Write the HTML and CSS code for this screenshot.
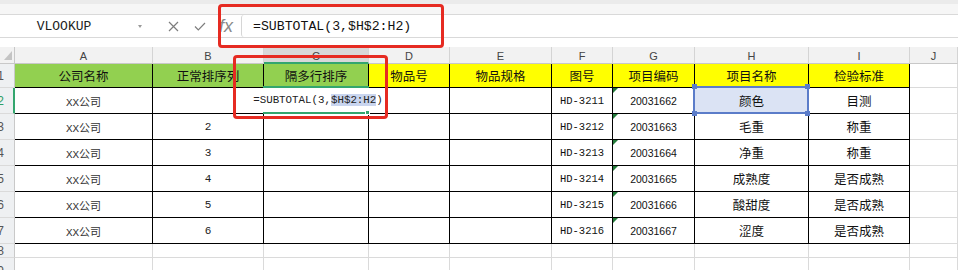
FILE: index.html
```html
<!doctype html>
<html lang="zh-CN">
<head>
  <meta charset="utf-8">
  <title>SUBTOTAL 隔多行排序</title>
  <link rel="stylesheet" href="styles.css">
</head>
<body>
  <div class="toolbar"></div>

  <div class="fbar">
    <div class="namebox"><span class="nb-text">VLOOKUP</span><span class="nb-arrow"></span></div>
    <svg class="ico-x" width="11" height="11" viewBox="0 0 11 11"><path d="M1 1L10 10M10 1L1 10" stroke="#7d7d7d" stroke-width="1.2" fill="none"/></svg>
    <svg class="ico-ok" width="12" height="9" viewBox="0 0 12 9"><path d="M1 4.5L4.3 7.8L11 1" stroke="#7d7d7d" stroke-width="1.2" fill="none"/></svg>
    <span class="fx">fx</span>
    <div class="finput">=SUBTOTAL(3,$H$2:H2)</div>
  </div>

  <div class="sheet">
    <!-- column headers -->
    <div class="c corner"></div>
    <div class="c ch">A</div>
    <div class="c ch">B</div>
    <div class="c ch cur">C</div>
    <div class="c ch">D</div>
    <div class="c ch">E</div>
    <div class="c ch">F</div>
    <div class="c ch">G</div>
    <div class="c ch">H</div>
    <div class="c ch">I</div>
    <div class="c ch">J</div>

    <!-- 1 -->
    <div class="c rh">1</div>
    <div class="c t g">公司名称</div>
    <div class="c t g">正常排序列</div>
    <div class="c t g">隔多行排序</div>
    <div class="c t y">物品号</div>
    <div class="c t y">物品规格</div>
    <div class="c t y">图号</div>
    <div class="c t y">项目编码</div>
    <div class="c t y">项目名称</div>
    <div class="c t y">检验标准</div>
    <div class="c"></div>

    <!-- 2 -->
    <div class="c rh on">2</div>
    <div class="c t co">XX公司</div>
    <div class="c t num"></div>
    <div class="c t edit">
      <div class="editor">=SUBTOTAL(3,<span class="ref">$H$2:H2</span>)</div>
      <span class="fill-h"></span>
    </div>
    <div class="c t"></div>
    <div class="c t"></div>
    <div class="c t dr">HD-3211</div>
    <div class="c t code">20031662</div>
    <div class="c t sel">颜色
      <span class="hd tl"></span><span class="hd tr"></span><span class="hd bl"></span><span class="hd br"></span>
    </div>
    <div class="c t">目测</div>
    <div class="c"></div>

    <!-- 3 -->
    <div class="c rh">3</div>
    <div class="c t co">XX公司</div>
    <div class="c t num">2</div>
    <div class="c t"></div>
    <div class="c t"></div>
    <div class="c t"></div>
    <div class="c t dr">HD-3212</div>
    <div class="c t code">20031663</div>
    <div class="c t">毛重</div>
    <div class="c t">称重</div>
    <div class="c"></div>

    <!-- 4 -->
    <div class="c rh">4</div>
    <div class="c t co">XX公司</div>
    <div class="c t num">3</div>
    <div class="c t"></div>
    <div class="c t"></div>
    <div class="c t"></div>
    <div class="c t dr">HD-3213</div>
    <div class="c t code">20031664</div>
    <div class="c t">净重</div>
    <div class="c t">称重</div>
    <div class="c"></div>

    <!-- 5 -->
    <div class="c rh">5</div>
    <div class="c t co">XX公司</div>
    <div class="c t num">4</div>
    <div class="c t"></div>
    <div class="c t"></div>
    <div class="c t"></div>
    <div class="c t dr">HD-3214</div>
    <div class="c t code">20031665</div>
    <div class="c t">成熟度</div>
    <div class="c t">是否成熟</div>
    <div class="c"></div>

    <!-- 6 -->
    <div class="c rh">6</div>
    <div class="c t co">XX公司</div>
    <div class="c t num">5</div>
    <div class="c t"></div>
    <div class="c t"></div>
    <div class="c t"></div>
    <div class="c t dr">HD-3215</div>
    <div class="c t code">20031666</div>
    <div class="c t">酸甜度</div>
    <div class="c t">是否成熟</div>
    <div class="c"></div>

    <!-- 7 -->
    <div class="c rh">7</div>
    <div class="c t co">XX公司</div>
    <div class="c t num">6</div>
    <div class="c t"></div>
    <div class="c t"></div>
    <div class="c t"></div>
    <div class="c t dr">HD-3216</div>
    <div class="c t code">20031667</div>
    <div class="c t">涩度</div>
    <div class="c t">是否成熟</div>
    <div class="c"></div>

    <!-- 8 -->
    <div class="c rh">8</div>
    <div class="c"></div><div class="c"></div><div class="c"></div><div class="c"></div><div class="c"></div>
    <div class="c"></div><div class="c"></div><div class="c"></div><div class="c"></div><div class="c"></div>

    <!-- 9 -->
    <div class="c rh">9</div>
    <div class="c"></div><div class="c"></div><div class="c"></div><div class="c"></div><div class="c"></div>
    <div class="c"></div><div class="c"></div><div class="c"></div><div class="c"></div><div class="c"></div>
  </div>

  <div class="mark mark-bar"></div>
  <div class="mark mark-cell"></div>
</body>
</html>
```

FILE: styles.css
```css
:root{
  --grid:#dadada; --head:#f2f2f2; --rowhead:#eef0f2;
  --green:#92d050; --yellow:#ffff00; --active:#33a66e;
  --selfill:#dbe3f4; --seledge:#5b7cc9; --red:#e62b22;
}
html,body{margin:0;padding:0;background:#fff}
body{
  position:relative;width:958px;height:270px;overflow:hidden;
  font-family:"Noto Sans CJK SC","Liberation Sans",sans-serif;
  font-size:12.5px;color:#111
}

/* toolbar + formula bar */
.toolbar{height:10px;background:#f6f6f6;border-top:4px solid #ebebeb}
.fbar{
  display:flex;align-items:center;height:22px;
  border-top:1px solid #d9d9d9;border-bottom:1px solid #d9d9d9
}
.namebox{display:flex;align-items:center;width:150px;flex:none}
.nb-text{width:128px;text-align:center;font:13px "Liberation Mono",monospace;color:#222}
.nb-arrow{
  margin-left:10px;width:0;height:0;
  border-left:2.5px solid transparent;border-right:2.5px solid transparent;
  border-top:3px solid #9a9a9a
}
.ico-x{margin-left:18px;flex:none}
.ico-ok{margin-left:15px;flex:none}
.fx{
  margin-left:13px;width:15px;flex:none;
  font:italic 18px "Liberation Sans",sans-serif;color:#8a8a8a;line-height:1
}
.finput{
  flex:1;align-self:stretch;margin-left:7px;padding-left:11px;
  display:flex;align-items:center;border-left:1px solid #d6d6d6;border-radius:3px 0 0 3px;
  font:13.2px "Liberation Mono",monospace;color:#111
}

/* sheet */
.sheet{
  position:relative;margin-top:9px;display:grid;
  grid-template-columns:15px 138px 111px 105px 81px 102px 61px 82px 114px 101px 1fr;
  grid-template-rows:17px 24px repeat(6,26px) 14px 26px
}
.c{
  box-sizing:border-box;min-width:0;white-space:nowrap;
  display:flex;align-items:center;justify-content:center;
  border-right:1px solid var(--grid);border-bottom:1px solid var(--grid)
}
.ch{
  background:var(--head);border-right-color:#d4d4d4;border-bottom-color:#c8c8c8;
  font:11px "Liberation Sans",sans-serif;color:#444;padding-top:2px
}
.ch.cur{background:#d8d8d8;border-bottom:2px solid var(--active)}
.corner{position:relative;background:var(--head);border-bottom-color:#c8c8c8;border-right-color:#c8c8c8}
.corner::after{
  content:"";position:absolute;right:2px;bottom:3px;width:0;height:0;
  border-left:8px solid transparent;border-bottom:9px solid #c4c4c4
}
.rh{
  background:var(--rowhead);justify-content:flex-end;padding-right:10px;overflow:hidden;
  border-right-color:#c9c9c9;font:12px "Liberation Sans",sans-serif;color:#555
}
.rh.on{color:#2f9e66;border-right:2px solid var(--active);padding-right:9px}

.t{border-right-color:#000;border-bottom-color:#000}
.g{background:var(--green)}
.y{background:var(--yellow)}
.co{font:11px "Liberation Mono","Noto Sans CJK SC",monospace;color:#333}
.num{font:11px "Liberation Mono",monospace;color:#222}
.dr{font:10.5px "Liberation Mono",monospace;color:#111}
.code{position:relative;font:10.5px "Liberation Sans",sans-serif;color:#111}
.code::before{
  content:"";position:absolute;left:0;top:0;width:0;height:0;
  border-top:5px solid #237b3a;border-right:5px solid transparent
}

/* cell being edited */
.edit{position:relative}
.edit::before,.edit::after{
  content:"";position:absolute;left:-1px;right:-1px;height:2px;
  background:var(--active);z-index:3
}
.edit::before{top:-2px}
.edit::after{top:24px}
.editor{
  position:absolute;left:-14px;top:0;width:136px;height:24px;z-index:2;
  display:flex;align-items:center;justify-content:center;background:#fff;
  font:10.8px "Liberation Mono",monospace;color:#222
}
.ref{background:#c9d5ef}
.fill-h{
  position:absolute;left:101px;top:22px;width:5px;height:5px;
  background:var(--active);border:1px solid #fff;box-sizing:border-box;z-index:4
}

/* selected cell */
.sel{position:relative;background:var(--selfill)}
.sel::after{
  content:"";position:absolute;left:-2px;top:-2px;right:-1px;bottom:-1px;
  border:2px solid var(--seledge);z-index:2
}
.hd{position:absolute;width:5px;height:5px;background:var(--seledge);z-index:3}
.hd.tl{left:-3px;top:-4px}
.hd.tr{left:110px;top:-4px}
.hd.bl{left:-3px;top:23px}
.hd.br{left:110px;top:23px}

/* red annotation frames */
.mark{
  position:absolute;box-sizing:border-box;z-index:5;
  border:3px solid var(--red);border-radius:4px
}
.mark-bar{left:218px;top:4px;width:226px;height:44px}
.mark-cell{left:233px;top:55px;width:155px;height:64px}
```
